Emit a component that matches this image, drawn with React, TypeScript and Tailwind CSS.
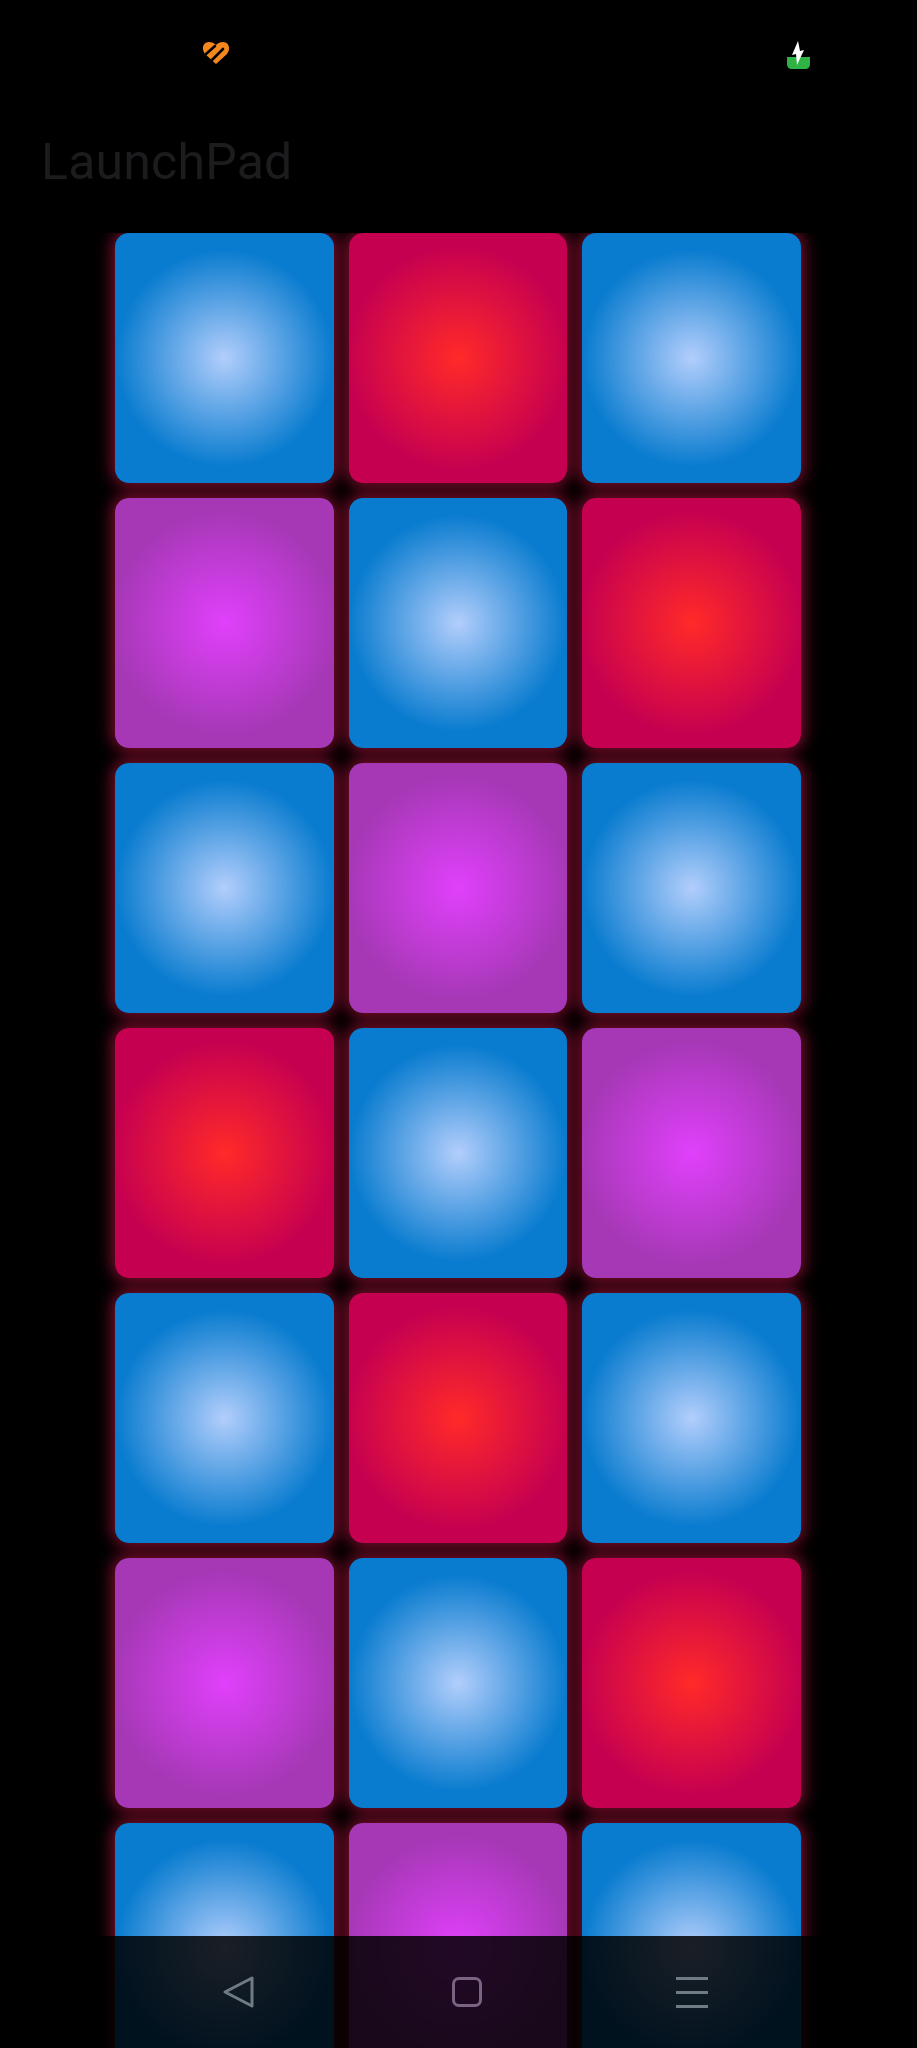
const BLUE = "blue";
const RED = "red";
const PURPLE = "purple";

const pads = [
  BLUE, RED, BLUE,
  PURPLE, BLUE, RED,
  BLUE, PURPLE, BLUE,
  RED, BLUE, PURPLE,
  BLUE, RED, BLUE,
  PURPLE, BLUE, RED,
  BLUE, PURPLE, BLUE,
];

const padClass: Record<string, string> = {
  blue: "bg-[radial-gradient(circle_108px_at_center,#b2cefc_0%,#0a7ccf_100%)]",
  red: "bg-[radial-gradient(circle_112px_at_center,#ff2a28_0%,#c60050_100%)]",
  purple: "bg-[radial-gradient(circle_112px_at_center,#e040fb_0%,#a638b6_100%)]",
};

function Pad({ color }: { color: string }) {
  return (
    <div
      className={`relative h-[250px] rounded-[14px] before:absolute before:inset-0 before:-z-10 before:rounded-[14px] before:shadow-[0_0_16px_3px_rgba(255,30,90,0.5)] ${padClass[color]}`}
    />
  );
}

export default function App() {
  return (
    <div className="relative flex h-[2048px] w-[917px] flex-col overflow-hidden bg-black font-['Roboto',sans-serif]">
      <div className="flex h-[134px] shrink-0 items-start justify-between pl-[202px] pr-[107px] pt-[41px]">
        <svg width="28" height="24" viewBox="0 0 28 24">
          <path d="M14 23 L3 13 C-1 8 1 1 7 1 C10 1 12 2 14 4 C16 2 18 1 21 1 C27 1 29 8 25 13 Z" fill="#f5871f" />
          <path d="M4 13 L13 5 M10 19 L21 8" stroke="#000000" strokeWidth="2.6" strokeLinecap="round" />
        </svg>
        <svg width="23" height="28" viewBox="0 0 23 28">
          <path d="M0 16 H23 V23 C23 26 21 28 18 28 H5 C2 28 0 26 0 23 Z" fill="#2fb344" />
          <path d="M11 0 L5 14 L9 13 L10 24 L17 9 L13 10 Z" fill="#ffffff" />
        </svg>
      </div>

      <h1 className="ml-[41px] h-[99px] shrink-0 text-[50px] leading-[56px] font-normal tracking-[0.2px] text-[#1c1c1e]">
        LaunchPad
      </h1>

      <div className="min-h-0 flex-1 overflow-hidden">
        <div className="isolate ml-[115px] grid w-[686px] grid-cols-3 gap-[15px]">
          {pads.map((color, i) => (
            <Pad key={i} color={color} />
          ))}
        </div>
      </div>

      <div className="absolute bottom-0 left-0 flex h-[112px] w-full bg-black/85">
        <svg className="absolute left-[222px] top-[39px]" width="34" height="34" viewBox="0 0 34 34" fill="none" stroke="#6f7b85" strokeWidth="3" strokeLinejoin="round">
          <path d="M30 3 V31 L3 17 Z" />
        </svg>
        <div className="absolute left-[452px] top-[41px] h-[30px] w-[30px] rounded-[7px] border-[3px] border-[#7b6383]" />
        <div className="absolute left-[676px] top-[41px] flex w-[32px] flex-col gap-[11px]">
          <div className="h-[3px] bg-[#6f7b85]" />
          <div className="h-[3px] bg-[#6f7b85]" />
          <div className="h-[3px] bg-[#6f7b85]" />
        </div>
      </div>
    </div>
  );
}
